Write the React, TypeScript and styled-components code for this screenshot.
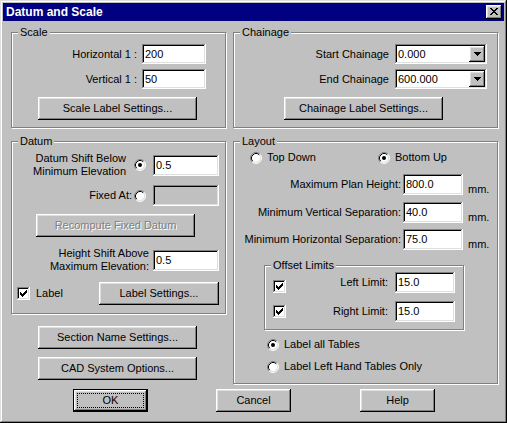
import React from "react";
import styled, { createGlobalStyle, css } from "styled-components";

const GlobalStyle = createGlobalStyle`
  html, body {
    margin: 0;
    padding: 0;
    background: #c0c0c0;
  }
  body {
    font-family: "Liberation Sans", Arial, sans-serif;
    font-size: 11px;
    color: #000;
  }
  * {
    box-sizing: border-box;
  }
`;

const raised = css`
  box-shadow: inset -1px -1px #000, inset 1px 1px #fff, inset -2px -2px #808080,
    inset 2px 2px #dfdfdf;
`;

const sunken = css`
  box-shadow: inset -1px -1px #fff, inset 1px 1px #808080, inset -2px -2px #dfdfdf,
    inset 2px 2px #000;
`;

const Window = styled.div`
  width: 507px;
  height: 423px;
  padding: 3px;
  background: #c0c0c0;
  box-shadow: inset -1px -1px #000, inset 1px 1px #dfdfdf, inset -2px -2px #808080,
    inset 2px 2px #fff;
  display: flex;
  flex-direction: column;
`;

const TitleBar = styled.div`
  height: 18px;
  flex: none;
  display: flex;
  align-items: center;
  justify-content: space-between;
  padding: 0 2px 0 3px;
  background: #000080;
  color: #fff;
  font-weight: bold;
  font-size: 12px;
`;

const CloseButton = styled.div`
  width: 16px;
  height: 14px;
  background: #c0c0c0;
  ${raised};
  display: flex;
  align-items: center;
  justify-content: center;
  padding-bottom: 1px;
`;

const Body = styled.div`
  display: grid;
  grid-template-columns: 215px 265px;
  column-gap: 7px;
  align-items: start;
  padding: 11px 0 0 8px;
`;

const Column = styled.div`
  display: flex;
  flex-direction: column;
  align-items: flex-start;
  margin-top: 13px;
`;

const Group = styled.div<{ $w: number; $h: number; $pad: string; $mt?: number; $ml?: number }>`
  position: relative;
  flex: none;
  width: ${(p) => p.$w}px;
  height: ${(p) => p.$h}px;
  margin-top: ${(p) => p.$mt ?? 0}px;
  margin-left: ${(p) => p.$ml ?? 0}px;
  padding: ${(p) => p.$pad};
  border: 1px solid #808080;
  box-shadow: 1px 1px 0 #fff, inset 1px 1px 0 #fff;
  display: flex;
  flex-direction: column;
  align-items: flex-start;
`;

const GroupTitle = styled.span`
  position: absolute;
  top: -7px;
  left: 6px;
  padding: 0 2px;
  line-height: 13px;
  background: #c0c0c0;
`;

const Row = styled.div<{ $h?: number; $mt?: number; $pl?: number }>`
  display: flex;
  align-items: center;
  width: 100%;
  height: ${(p) => p.$h ?? 21}px;
  margin-top: ${(p) => p.$mt ?? 0}px;
  padding-left: ${(p) => p.$pl ?? 0}px;
`;

const Label = styled.span<{ $w: number; $mr?: number }>`
  flex: none;
  width: ${(p) => p.$w}px;
  margin-right: ${(p) => p.$mr ?? 0}px;
  text-align: right;
  white-space: pre-line;
  line-height: 13px;
`;

const Text = styled.span<{ $ml?: number }>`
  margin-left: ${(p) => p.$ml ?? 0}px;
  line-height: 13px;
  white-space: nowrap;
`;

const Unit = styled.span`
  align-self: flex-end;
  margin-left: 5px;
  margin-bottom: -1px;
  line-height: 13px;
`;

const TextBox = styled.div<{ $w: number; $h?: number; $ml?: number; $disabled?: boolean }>`
  flex: none;
  width: ${(p) => p.$w}px;
  height: ${(p) => p.$h ?? 21}px;
  margin-left: ${(p) => p.$ml ?? 0}px;
  padding: 0 3px 1px;
  background: ${(p) => (p.$disabled ? "#c0c0c0" : "#fff")};
  ${sunken};
  display: flex;
  align-items: center;
`;

const Combo = styled.div`
  flex: none;
  width: 92px;
  height: 20px;
  padding: 2px;
  background: #fff;
  ${sunken};
  display: flex;
  align-items: center;
`;

const ComboText = styled.span`
  flex: 1;
  padding-left: 1px;
  padding-bottom: 1px;
`;

const ComboButton = styled.div`
  width: 16px;
  height: 16px;
  background: #c0c0c0;
  ${raised};
  display: flex;
  align-items: center;
  justify-content: center;
`;

const Button = styled.button<{ $w: number; $mt?: number; $ml?: number; $mr?: number }>`
  flex: none;
  position: relative;
  width: ${(p) => p.$w}px;
  height: 23px;
  margin: ${(p) => p.$mt ?? 0}px ${(p) => p.$mr ?? 0}px 0 ${(p) => p.$ml ?? 0}px;
  padding: 0 0 1px;
  border: 0;
  background: #c0c0c0;
  ${raised};
  font: inherit;
  color: #000;
  &:disabled {
    color: #808080;
    text-shadow: 1px 1px 0 #fff;
  }
`;

const DefaultButton = styled(Button)`
  box-shadow: inset 0 0 0 1px #000, inset -2px -2px #000, inset 2px 2px #fff,
    inset -3px -3px #808080, inset 3px 3px #dfdfdf;
  &::after {
    content: "";
    position: absolute;
    top: 4px;
    left: 4px;
    right: 4px;
    bottom: 4px;
    border: 1px dotted #000;
  }
`;

const ButtonBar = styled.div`
  grid-column: 1 / -1;
  display: flex;
  margin-top: 5px;
  padding-left: 62px;
`;

const CheckBoxBox = styled.span<{ $end?: boolean; $ml?: number }>`
  flex: none;
  width: 13px;
  height: 13px;
  margin-left: ${(p) => p.$ml ?? 0}px;
  align-self: ${(p) => (p.$end ? "flex-end" : "center")};
  background: #fff;
  ${sunken};
  display: flex;
  align-items: center;
  justify-content: center;
`;

const RadioSvg = styled.svg`
  flex: none;
  display: block;
`;

const RadioItem = styled.div<{ $w?: number }>`
  display: flex;
  align-items: center;
  width: ${(p) => (p.$w ? `${p.$w}px` : "auto")};
  gap: 5px;
`;

function Radio({ checked }: { checked?: boolean }) {
  return (
    <RadioSvg width="12" height="12" viewBox="0 0 12 12">
      <circle cx="6" cy="6" r="5" fill="#fff" />
      <path d="M2.11 9.89 A5.5 5.5 0 0 1 9.89 2.11" stroke="#808080" fill="none" />
      <path d="M9.89 2.11 A5.5 5.5 0 0 1 2.11 9.89" stroke="#fff" fill="none" />
      <path d="M2.82 9.18 A4.5 4.5 0 0 1 9.18 2.82" stroke="#000" fill="none" />
      <path d="M9.18 2.82 A4.5 4.5 0 0 1 2.82 9.18" stroke="#dfdfdf" fill="none" />
      {checked && <circle cx="6" cy="6" r="2" fill="#000" />}
    </RadioSvg>
  );
}

function CheckBox({ end, ml }: { end?: boolean; ml?: number }) {
  return (
    <CheckBoxBox $end={end} $ml={ml}>
      <svg width="7" height="7" viewBox="0 0 7 7" shapeRendering="crispEdges">
        <path
          fill="#000"
          d="M6 0h1v1h-1z M5 1h2v1h-2z M0 2h1v1h-1z M4 2h3v1h-3z M0 3h2v1h-2z M3 3h3v1h-3z M0 4h5v1h-5z M1 5h3v1h-3z M2 6h1v1h-1z"
        />
      </svg>
    </CheckBoxBox>
  );
}

function DropArrow() {
  return (
    <svg width="7" height="4" viewBox="0 0 7 4" shapeRendering="crispEdges">
      <path fill="#000" d="M0 0h7v1h-7z M1 1h5v1h-5z M2 2h3v1h-3z M3 3h1v1h-1z" />
    </svg>
  );
}

function CloseGlyph() {
  return (
    <svg width="8" height="7" viewBox="0 0 8 7" shapeRendering="crispEdges">
      <path
        fill="#000"
        d="M0 0h2v1h-2z M6 0h2v1h-2z M1 1h2v1h-2z M5 1h2v1h-2z M2 2h4v1h-4z M3 3h2v1h-2z M2 4h4v1h-4z M1 5h2v1h-2z M5 5h2v1h-2z M0 6h2v1h-2z M6 6h2v1h-2z"
      />
    </svg>
  );
}

export default function App() {
  return (
    <>
      <GlobalStyle />
      <Window>
        <TitleBar>
          <span>Datum and Scale</span>
          <CloseButton>
            <CloseGlyph />
          </CloseButton>
        </TitleBar>
        <Body>
          <Group $w={215} $h={96} $pad="11px 0 0 0">
            <GroupTitle>Scale</GroupTitle>
            <Row $h={20}>
              <Label $w={125} $mr={5}>Horizontal 1 :</Label>
              <TextBox $w={64} $h={20}>200</TextBox>
            </Row>
            <Row $h={20} $mt={5}>
              <Label $w={125} $mr={5}>Vertical 1 :</Label>
              <TextBox $w={64} $h={20}>50</TextBox>
            </Row>
            <Button $w={159} $mt={8} $ml={26}>Scale Label Settings...</Button>
          </Group>

          <Group $w={265} $h={96} $pad="11px 0 0 0">
            <GroupTitle>Chainage</GroupTitle>
            <Row $h={20}>
              <Label $w={155} $mr={6}>Start Chainage</Label>
              <Combo>
                <ComboText>0.000</ComboText>
                <ComboButton>
                  <DropArrow />
                </ComboButton>
              </Combo>
            </Row>
            <Row $h={20} $mt={5}>
              <Label $w={155} $mr={6}>End Chainage</Label>
              <Combo>
                <ComboText>600.000</ComboText>
                <ComboButton>
                  <DropArrow />
                </ComboButton>
              </Combo>
            </Row>
            <Button $w={159} $mt={8} $ml={50}>Chainage Label Settings...</Button>
          </Group>

          <Column>
            <Group $w={215} $h={173} $pad="10px 0 0 0">
              <GroupTitle>Datum</GroupTitle>
              <Row $h={26}>
                <Label $w={114} $mr={8}>{"Datum Shift Below\nMinimum Elevation"}</Label>
                <Radio checked />
                <TextBox $w={66} $ml={7}>0.5</TextBox>
              </Row>
              <Row $mt={7}>
                <Label $w={120} $mr={2}>Fixed At:</Label>
                <Radio />
                <TextBox $w={66} $ml={7} $disabled />
              </Row>
              <Button $w={159} $mt={8} $ml={24} disabled>
                Recompute Fixed Datum
              </Button>
              <Row $h={26} $mt={10}>
                <Label $w={137} $mr={4}>{"Height Shift Above\nMaximum Elevation:"}</Label>
                <TextBox $w={66}>0.5</TextBox>
              </Row>
              <Row $h={23} $mt={9} $pl={5}>
                <CheckBox />
                <Text $ml={6}>Label</Text>
                <Button $w={120} $ml={36}>Label Settings...</Button>
              </Row>
            </Group>
            <Button $w={159} $mt={12} $ml={27}>Section Name Settings...</Button>
            <Button $w={159} $mt={8} $ml={27}>CAD System Options...</Button>
          </Column>

          <Column>
            <Group $w={265} $h={243} $pad="9px 0 0 0">
              <GroupTitle>Layout</GroupTitle>
              <Row $h={13} $pl={16}>
                <RadioItem $w={128}>
                  <Radio />
                  <Text>Top Down</Text>
                </RadioItem>
                <RadioItem>
                  <Radio checked />
                  <Text>Bottom Up</Text>
                </RadioItem>
              </Row>
              <Row $mt={10}>
                <Label $w={167} $mr={2}>Maximum Plan Height:</Label>
                <TextBox $w={60}>800.0</TextBox>
                <Unit>mm.</Unit>
              </Row>
              <Row $mt={7}>
                <Label $w={167} $mr={2}>Minimum Vertical Separation:</Label>
                <TextBox $w={60}>40.0</TextBox>
                <Unit>mm.</Unit>
              </Row>
              <Row $mt={6}>
                <Label $w={167} $mr={2}>Minimum Horizontal Separation:</Label>
                <TextBox $w={60}>75.0</TextBox>
                <Unit>mm.</Unit>
              </Row>
              <Group $w={200} $h={65} $pad="6px 0 0 8px" $mt={15} $ml={30}>
                <GroupTitle>Offset Limits</GroupTitle>
                <Row>
                  <CheckBox end />
                  <Label $w={102} $mr={7}>Left Limit:</Label>
                  <TextBox $w={60}>15.0</TextBox>
                </Row>
                <Row $mt={8}>
                  <CheckBox />
                  <Label $w={102} $mr={7}>Right Limit:</Label>
                  <TextBox $w={60}>15.0</TextBox>
                </Row>
              </Group>
              <Row $h={13} $mt={8} $pl={33}>
                <RadioItem>
                  <Radio checked />
                  <Text>Label all Tables</Text>
                </RadioItem>
              </Row>
              <Row $h={13} $mt={9} $pl={33}>
                <RadioItem>
                  <Radio />
                  <Text>Label Left Hand Tables Only</Text>
                </RadioItem>
              </Row>
            </Group>
          </Column>

          <ButtonBar>
            <DefaultButton $w={75}>OK</DefaultButton>
            <Button $w={75} $ml={68}>Cancel</Button>
            <Button $w={75} $ml={69}>Help</Button>
          </ButtonBar>
        </Body>
      </Window>
    </>
  );
}
